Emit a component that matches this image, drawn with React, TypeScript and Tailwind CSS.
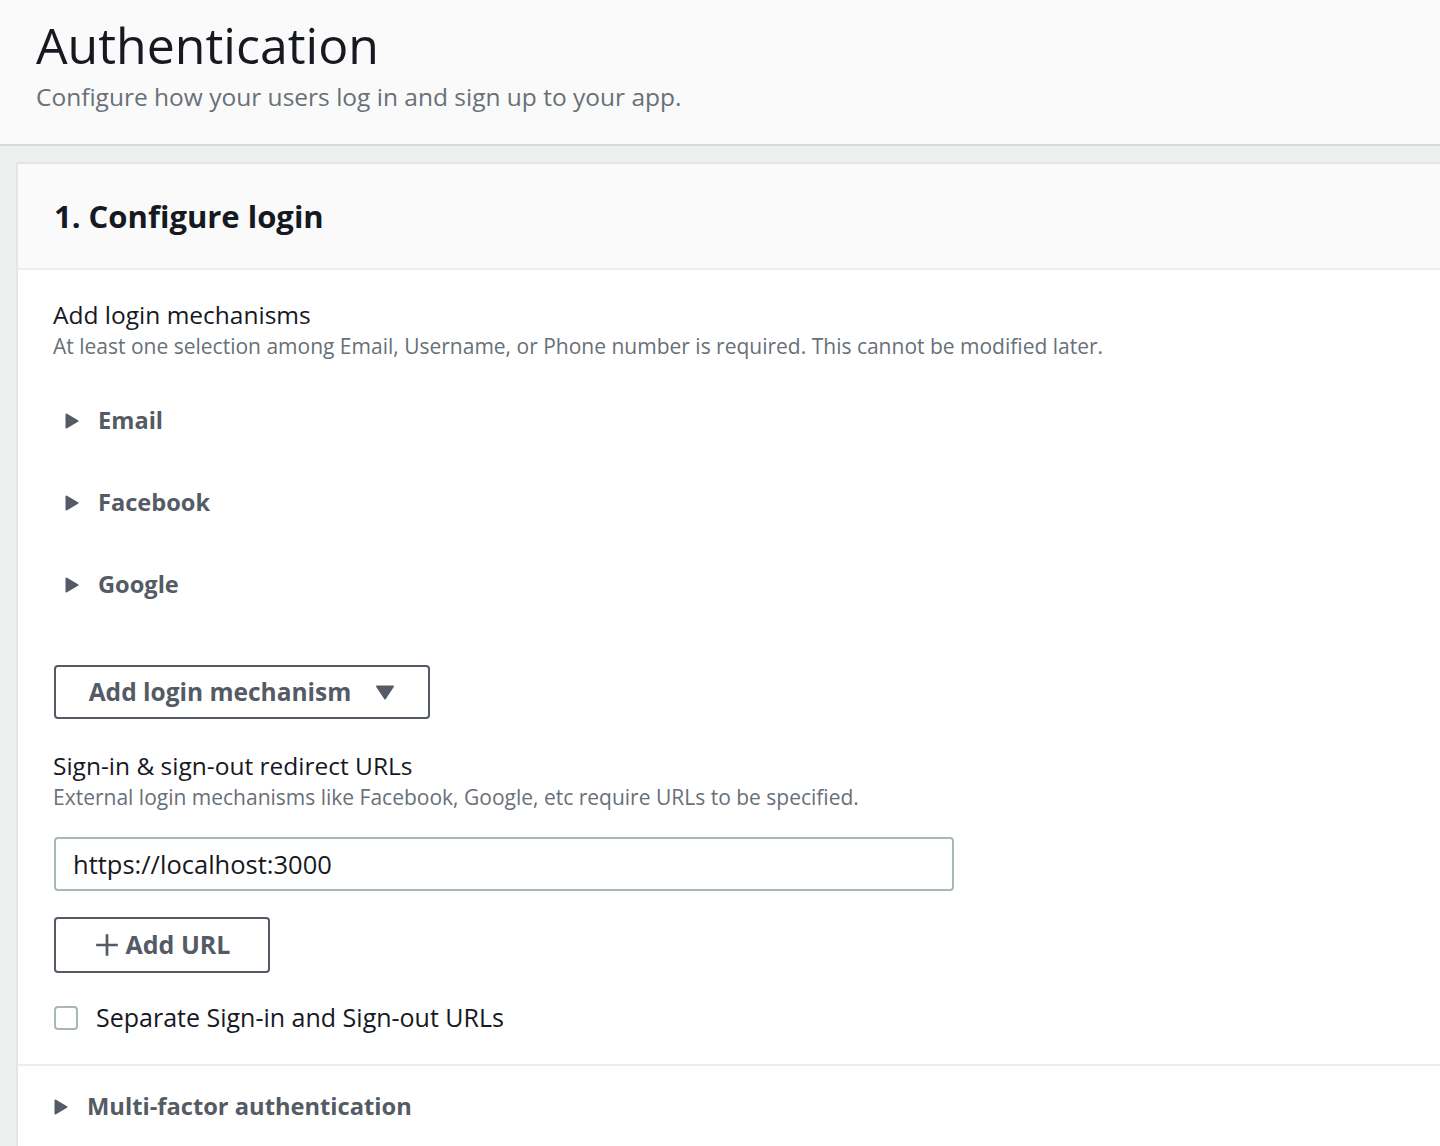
import React from "react";

const font = { fontFamily: "'Open Sans', 'Noto Sans', sans-serif" };

function Caret({ className = "" }: { className?: string }) {
  return (
    <svg viewBox="0 0 14 16" className={className} fill="#545b64">
      <path d="M1.5 1.5 L12.5 8 L1.5 14.5 Z" stroke="#545b64" strokeWidth="2" strokeLinejoin="round" />
    </svg>
  );
}

function Expandable({ label }: { label: string }) {
  return (
    <div className="flex items-center h-[82px]">
      <Caret className="w-[14px] h-[16px] ml-[12px]" />
      <span className="ml-[19px] text-[23.6px] font-bold text-[#545b64]">{label}</span>
    </div>
  );
}

export default function App() {
  return (
    <div className="min-h-[1146px] bg-[#eef0ef] text-[#16191f]" style={font}>
      <div className="bg-[#fafafa] border-b-2 border-[#d5dbdb] h-[146px] pl-[36px] pt-[13px]">
        <h1 className="text-[50px] leading-[64px] text-[#16191f] font-normal">Authentication</h1>
        <p className="text-[24.5px] leading-[30px] text-[#687078] mt-[5px]">
          Configure how your users log in and sign up to your app.
        </p>
      </div>
      <div className="pt-[16px] pl-[16px]">
        <div className="bg-white border-l-2 border-t-2 border-[#e3e6e6] min-h-[982px]">
          <div className="bg-[#fafafa] border-b-2 border-[#eaeded] h-[106px] flex items-center pl-[36px]">
            <h2 className="text-[31px] font-bold text-[#16191f]">1. Configure login</h2>
          </div>
          <div className="pl-[35px] pt-[28px]">
            <div className="text-[24.5px] leading-[34px] text-[#16191f]">Add login mechanisms</div>
            <div className="text-[21px] leading-[28px] text-[#687078]">
              At least one selection among Email, Username, or Phone number is required. This cannot be modified later.
            </div>
            <div className="mt-[20px]">
              <Expandable label="Email" />
              <Expandable label="Facebook" />
              <Expandable label="Google" />
            </div>
            <button className="mt-[39px] ml-[1px] w-[376px] h-[54px] border-2 border-[#545b64] rounded-[4px] flex items-center justify-center gap-[24px] text-[24.5px] font-bold text-[#545b64] bg-white">
              <span>Add login mechanism</span>
              <svg viewBox="0 0 20 16" className="w-[20px] h-[15px]" fill="#545b64">
                <path d="M1.5 1.5 L18.5 1.5 L10 14.5 Z" stroke="#545b64" strokeWidth="2" strokeLinejoin="round" />
              </svg>
            </button>
            <div className="mt-[30px] text-[24.5px] leading-[34px] text-[#16191f]">Sign-in &amp; sign-out redirect URLs</div>
            <div className="text-[21px] leading-[28px] text-[#687078]">
              External login mechanisms like Facebook, Google, etc require URLs to be specified.
            </div>
            <div className="mt-[26px] ml-[1px] w-[900px] h-[54px] border-2 border-[#aab7b8] rounded-[4px] flex items-center pl-[17px] text-[25.5px] text-[#16191f]">
              https://localhost:3000
            </div>
            <button className="mt-[26px] ml-[1px] w-[216px] h-[56px] border-2 border-[#545b64] rounded-[4px] flex items-center justify-center gap-[6px] text-[25px] font-bold text-[#545b64] bg-white">
              <svg viewBox="0 0 24 24" className="w-[26px] h-[26px]" stroke="#545b64" strokeWidth="2.5" fill="none">
                <path d="M12 2 V22 M2 12 H22" />
              </svg>
              <span>Add URL</span>
            </button>
            <label className="mt-[32px] flex items-center h-[26px]">
              <span className="ml-[1px] w-[24px] h-[24px] border-2 border-[#aab7b8] rounded-[4px] bg-white" />
              <span className="ml-[18px] text-[25px] text-[#16191f]">Separate Sign-in and Sign-out URLs</span>
            </label>
          </div>
          <div className="mt-[33px] border-t-2 border-[#eaeded] h-[84px] flex items-center pl-[36px]">
            <Caret className="w-[14px] h-[16px]" />
            <span className="ml-[19px] text-[23.7px] font-bold text-[#545b64]">Multi-factor authentication</span>
          </div>
        </div>
      </div>
    </div>
  );
}
